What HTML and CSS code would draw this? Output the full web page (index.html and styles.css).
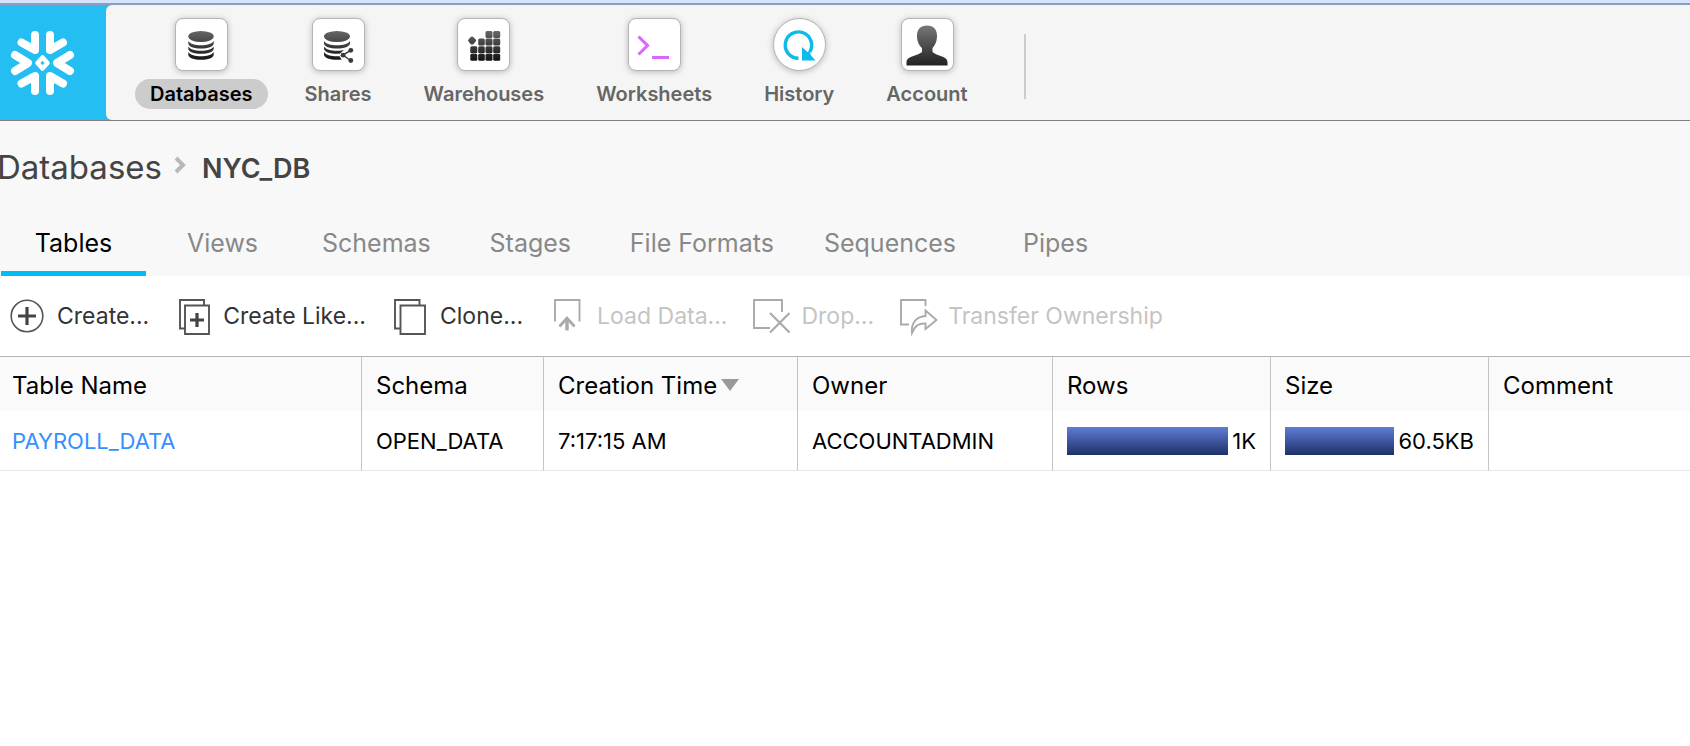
FILE: index.html
```html
<!DOCTYPE html>
<html lang="en">
<head>
<meta charset="utf-8">
<title>Databases - NYC_DB</title>
<link rel="stylesheet" href="styles.css">
</head>
<body>
<header class="topbar">
  <a class="logo" href="#" aria-label="Home">
    <svg width="106" height="115" viewBox="0 0 106 115" fill="none" stroke="#fff" stroke-width="8" stroke-linecap="round" stroke-linejoin="round">
      <path d="M35 30v15L21.500 37.500M50 30v15L63 37.500M35 86V71L21.500 78.500M50 86V71L63 78.500M15 50l13 8-13 8M70 50l-13 8 13 8"/>
      <path stroke-width="4.500" d="M42.500 52.500L47.500 58l-5 5.500L37.500 58z"/>
    </svg>
  </a>
  <nav class="nav">
    <a class="nav-item active" href="#">
      <span class="tile">
        <svg width="48" height="48" viewBox="0 0 48 48">
          <defs><linearGradient id="dark" gradientUnits="userSpaceOnUse" x1="0" y1="10" x2="0" y2="40"><stop offset="0" stop-color="#666"/><stop offset="1" stop-color="#111"/></linearGradient></defs>
          <g fill="url(#dark)">
            <ellipse cx="24" cy="15.500" rx="12.700" ry="5.500"/>
            <path d="M11.300 20c2 3 7 4.200 12.700 4.200S34.700 23 36.700 20v2.600c0 3-5.700 5-12.700 5s-12.700-2-12.700-5z"/>
            <path d="M11.300 25.500c2 3 7 4.200 12.700 4.200s10.700-1.200 12.700-4.200v2.300c0 3-5.700 5-12.700 5s-12.700-2-12.700-5z"/>
            <path d="M11.300 31c2 3 7 4.200 12.700 4.200S34.700 34 36.700 31v2.800c0 3-5.700 5-12.700 5s-12.700-2-12.700-5z"/>
          </g>
        </svg>
      </span>
      <span class="nav-label">Databases</span>
    </a>
    <a class="nav-item" href="#">
      <span class="tile">
        <svg width="48" height="48" viewBox="0 0 48 48">
          <g fill="url(#dark)">
            <ellipse cx="23" cy="15.500" rx="13" ry="5.500"/>
            <path d="M10 20c2 3 7 4.200 13 4.200S34 23 36 20v2.600c0 3-6 5-13 5s-13-2-13-5z"/>
            <path d="M10 25.500c2 3 7 4.200 13 4.200S34 28.500 36 25.500v2.300c0 3-6 5-13 5s-13-2-13-5z"/>
            <path d="M10 31c2 3 7 4.200 13 4.200S34 34 36 31v2.800c0 3-6 5-13 5s-13-2-13-5z"/>
          </g>
          <path fill="#fff" d="M25 33.500l10-9 8-1v19l-9 1c-5-2-7-5-9-10z"/>
          <path stroke="#444" stroke-width="1.500" fill="none" d="M36.500 29.500L29 34l7.500 5.500"/>
          <g fill="#3a3a3a"><circle cx="36.800" cy="29.300" r="2.400"/><circle cx="29" cy="34.200" r="2.400"/><circle cx="36.800" cy="39.500" r="2.400"/></g>
        </svg>
      </span>
      <span class="nav-label">Shares</span>
    </a>
    <a class="nav-item" href="#">
      <span class="tile">
        <svg width="48" height="48" viewBox="0 0 48 48">
          <g fill="url(#dark)">
            <path d="M12 15.500q1 0 1.500.8l2.200 2.200q1 1 0 2l-2.200 2.400q-1.500 1-3 0l-2-2.400q-1-1 0-2l2-2.200q.5-.8 1.500-.8z"/>
            <rect x="25.500" y="10" width="7" height="7" rx="1.500"/><rect x="33.200" y="10" width="7" height="7" rx="1.500"/>
            <rect x="18.200" y="17.600" width="6.600" height="7" rx="1.500"/><rect x="25.500" y="17.600" width="7" height="7" rx="1.500"/><rect x="33.200" y="17.600" width="7" height="7" rx="1.500"/>
            <rect x="10.300" y="25.200" width="7" height="7" rx="1.500"/><rect x="18.200" y="25.200" width="6.600" height="7" rx="1.500"/><rect x="25.500" y="25.200" width="7" height="7" rx="1.500"/><rect x="33.200" y="25.200" width="7" height="7" rx="1.500"/>
            <rect x="10.300" y="32.800" width="7" height="7" rx="1.500"/><rect x="18.200" y="32.800" width="6.600" height="7" rx="1.500"/><rect x="25.500" y="32.800" width="7" height="7" rx="1.500"/><rect x="33.200" y="32.800" width="7" height="7" rx="1.500"/>
          </g>
        </svg>
      </span>
      <span class="nav-label">Warehouses</span>
    </a>
    <a class="nav-item" href="#">
      <span class="tile">
        <svg width="48" height="48" viewBox="0 0 48 48" fill="none" stroke="#d966ff" stroke-width="3">
          <path d="M8.500 15.500l9 9-9 9M22 36.500h17"/>
        </svg>
      </span>
      <span class="nav-label">Worksheets</span>
    </a>
    <a class="nav-item" href="#">
      <span class="tile round">
        <svg width="48" height="48" viewBox="0 0 48 48">
          <path d="M23.500 37.300A13.200 13.200 0 1 1 34.700 31" fill="none" stroke="#0bbbea" stroke-width="3.400"/>
          <path d="M27 26l5.500 5 2-1 1.500 4.500 4.500 5H27z" fill="#0bbbea"/>
        </svg>
      </span>
      <span class="nav-label">History</span>
    </a>
    <a class="nav-item" href="#">
      <span class="tile">
        <svg width="48" height="48" viewBox="0 0 48 48">
          <defs><linearGradient id="person" x1="0" y1="0" x2="0" y2="1"><stop offset="0" stop-color="#777"/><stop offset="1" stop-color="#222"/></linearGradient></defs>
          <path fill="url(#person)" d="M24 4.500c6.500 0 10 4 10 10 0 6-2 10-4.500 12.500v4c2 2 6 3 9.500 4.500 4 1.500 5.500 3 5.500 6v3h-41v-3c0-3 1.500-4.500 5.500-6C12.500 34 17 33 19 31v-4c-3-2.500-5-6.500-5-12.500 0-6 3.500-10 10-10z"/>
        </svg>
      </span>
      <span class="nav-label">Account</span>
    </a>
    <span class="nav-divider"></span>
  </nav>
</header>

<section class="heading">
  <nav class="crumbs">
    <a class="crumb" href="#">Databases</a>
    <svg class="crumb-arrow" width="12" height="18" viewBox="0 0 12 18" fill="none" stroke="#b8b8b8" stroke-width="4"><path d="M2 2l7 7-7 7"/></svg>
    <h1 class="crumb-current">NYC_DB</h1>
  </nav>
  <nav class="tabs">
    <a class="tab selected" href="#">Tables</a>
    <a class="tab" href="#">Views</a>
    <a class="tab" href="#">Schemas</a>
    <a class="tab" href="#">Stages</a>
    <a class="tab" href="#">File Formats</a>
    <a class="tab" href="#">Sequences</a>
    <a class="tab" href="#">Pipes</a>
  </nav>
</section>

<main>
  <div class="toolbar">
    <button class="tool" type="button">
      <svg class="tool-icon" viewBox="0 0 50 40" fill="none" stroke="#555"><circle cx="20" cy="20" r="15.800" stroke-width="1.600"/><path stroke="#444" stroke-width="3.200" d="M20 11v18M11 20h18"/></svg>Create...
    </button>
    <button class="tool" type="button">
      <svg class="tool-icon" viewBox="0 0 50 40" fill="none" stroke="#555" stroke-width="1.900"><path d="M12 32.500H7V4h24v5M12 9.500h24V38H12z"/><path stroke="#444" stroke-width="3.200" d="M24 17v14M17 24h14"/></svg>Create Like...
    </button>
    <button class="tool" type="button">
      <svg class="tool-icon" viewBox="0 0 50 40" fill="none" stroke="#555" stroke-width="1.900"><path d="M10 32.500H5V4h24.500v5M10.500 9.500H35V38H10.500z"/></svg>Clone...
    </button>
    <button class="tool" type="button" disabled>
      <svg class="tool-icon" viewBox="0 0 50 40" fill="none" stroke="#aaa" stroke-width="1.900"><path d="M8 25.500V4h24.500v21.500"/><path stroke-width="3.500" d="M20 34.500V22"/><path stroke-width="2.800" d="M12.500 30.500L20 22l7.500 8.500"/></svg>Load Data...
    </button>
    <button class="tool" type="button" disabled>
      <svg class="tool-icon" viewBox="0 0 50 40" fill="none" stroke="#aaa" stroke-width="1.900"><path d="M19 32H3V4h28v12"/><path stroke-width="2.200" d="M19 17l19.500 19.500M38.500 17L19 36.500"/></svg>Drop...
    </button>
    <button class="tool" type="button" disabled>
      <svg class="tool-icon" viewBox="0 0 50 40" fill="none" stroke="#aaa" stroke-width="1.900"><path d="M11 28.500H3V4h24.500v6M27.500 14.500L38.500 24 27.500 33v-5.500c-7-.5-10 2-13.500 9.500-1-11 5-16.500 13.500-17z"/></svg>Transfer Ownership
    </button>
  </div>

  <table class="grid">
    <colgroup><col class="c-name"><col class="c-schema"><col class="c-time"><col class="c-owner"><col class="c-bar"><col class="c-bar"><col></colgroup>
    <thead>
      <tr>
        <th>Table Name</th>
        <th>Schema</th>
        <th>Creation Time<span class="sort"></span></th>
        <th>Owner</th>
        <th>Rows</th>
        <th>Size</th>
        <th>Comment</th>
      </tr>
    </thead>
    <tbody>
      <tr>
        <td><a class="table-link" href="#">PAYROLL_DATA</a></td>
        <td>OPEN_DATA</td>
        <td>7:17:15 AM</td>
        <td>ACCOUNTADMIN</td>
        <td><div class="meter"><span class="meter-bar"></span>1K</div></td>
        <td><div class="meter"><span class="meter-bar"></span>60.5KB</div></td>
        <td></td>
      </tr>
    </tbody>
  </table>
</main>
</body>
</html>
```
FILE: styles.css
```css
* {
  box-sizing: border-box;
}

body {
  margin: 0;
  background: #fff;
  color: #000;
  font-family: Inter, "Liberation Sans", sans-serif;
  border-top: 3px solid #d5e3fd;
}

a {
  color: inherit;
  text-decoration: none;
}

.topbar {
  display: flex;
  border-top: 2px solid #8e9dbb;
  border-bottom: 1px solid #808080;
  background: #24bef2;
}

.logo,
.logo svg {
  display: block;
}

.nav {
  flex: 1;
  display: flex;
  gap: 22px;
  padding: 13px 0 11px 29px;
  background: #f5f5f5;
  border-radius: 6px 0 0 6px;
}

.nav-item {
  display: flex;
  flex-direction: column;
  align-items: center;
  gap: 8px;
  color: #666;
  font-size: 20px;
  font-weight: 600;
  line-height: 30px;
}

.tile {
  display: flex;
  align-items: center;
  justify-content: center;
  width: 53px;
  height: 53px;
  background: #fff;
  border: 1px solid #b4b4b4;
  border-radius: 8px;
  box-shadow: 0 1px 6px rgba(0, 0, 0, 0.25);
}

.tile.round {
  border-radius: 50%;
}

.nav-label {
  padding: 0 15px;
  border-radius: 15px;
}

.active .nav-label {
  background: #ccc;
  color: #000;
}

.nav-divider {
  width: 2px;
  margin: 16px 0 10px 19px;
  background: #ccc;
}

.heading {
  background: #f8f8f8;
}

.crumbs {
  display: flex;
  align-items: center;
  margin-left: -3px;
  padding-top: 24px;
  color: #444;
}

.crumb {
  font-size: 33px;
  line-height: 44px;
}

.crumb-arrow {
  margin: 0 16px 4px 12px;
}

.crumb-current {
  margin: 4px 0 0;
  font-size: 27px;
  font-weight: 600;
  line-height: 40px;
}

.tabs {
  display: flex;
  gap: 4px;
  padding: 24px 0 0 1px;
}

.tab {
  min-width: 145px;
  padding: 12px 23px 10px;
  border-bottom: 5px solid transparent;
  color: #888;
  font-size: 25px;
  line-height: 36px;
  text-align: center;
}

.tab.selected {
  border-color: #00bdf5;
  color: #000;
}

.toolbar {
  display: flex;
  gap: 24px;
  padding: 20px 7px;
}

.tool {
  display: flex;
  align-items: center;
  padding: 0;
  border: 0;
  background: none;
  color: #333;
  font: 23px/40px Inter, "Liberation Sans", sans-serif;
}

.tool:disabled {
  color: #c4c4c4;
}

.tool-icon {
  width: 50px;
  height: 40px;
}

.grid {
  width: 100%;
  border-top: 1px solid #b4b4b4;
  border-spacing: 0;
  table-layout: fixed;
}

.c-name {
  width: 362px;
}

.c-schema {
  width: 182px;
}

.c-time {
  width: 254px;
}

.c-owner {
  width: 255px;
}

.c-bar {
  width: 218px;
}

.grid th,
.grid td {
  padding: 0 14px;
  border-right: 1px solid #c4c4c4;
  text-align: left;
  white-space: nowrap;
}

.grid th:first-child,
.grid td:first-child {
  padding-left: 12px;
}

.grid th:last-child,
.grid td:last-child {
  border-right: 0;
}

.grid th {
  height: 54px;
  padding-top: 2px;
  background: #fafafa;
  font-size: 24px;
  font-weight: 400;
}

.grid td {
  height: 60px;
  border-bottom: 1px solid #e8e8e8;
  font-size: 22px;
}

.table-link {
  color: #3390ff;
}

.sort {
  display: inline-block;
  margin-left: 4px;
  border: 9px solid transparent;
  border-top: 12px solid #999;
  border-bottom: 0;
  vertical-align: 3px;
}

.meter {
  display: flex;
  align-items: center;
  gap: 4px;
}

.meter-bar {
  flex: 1;
  height: 28px;
  background: linear-gradient(#5f7dd4, #1d3069);
}
```
